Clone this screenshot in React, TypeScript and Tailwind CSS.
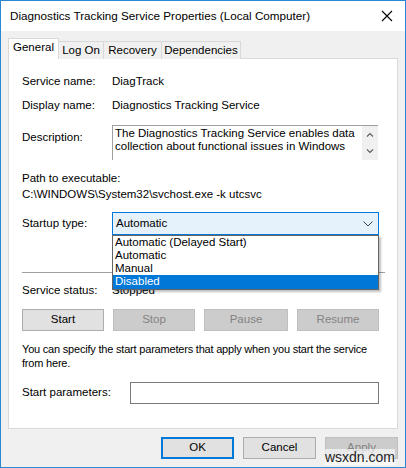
import React from "react";

const font = { fontFamily: '"Liberation Sans", Arial, sans-serif' };

function Btn({ label, disabled, w = "w-[81px]", def }: { label: string; disabled?: boolean; w?: string; def?: boolean }) {
  return (
    <div
      className={`${w} h-[22px] flex items-center justify-center ${
        disabled
          ? "bg-[#cccccc] border border-[#bfbfbf] text-[#838383]"
          : def
          ? "bg-[#e1e1e1] border-2 border-[#0078d7] text-black"
          : "bg-[#e1e1e1] border border-[#adadad] text-black"
      }`}
    >
      {label}
    </div>
  );
}

export default function App() {
  return (
    <div className="w-[406px] h-[468px] bg-[#f0f0f0] border border-[#2b86d3] flex flex-col text-[11.5px] text-black relative" style={font}>
      {/* title bar */}
      <div className="h-[30px] bg-white flex items-center justify-between pl-[9px] pr-[12px] shrink-0">
        <span className="text-[11.7px] leading-none">Diagnostics Tracking Service Properties (Local Computer)</span>
        <svg width="12" height="12" viewBox="0 0 12 12">
          <path d="M1 1L11 11M11 1L1 11" stroke="#000" strokeWidth="1.1" />
        </svg>
      </div>

      <div className="flex flex-col px-[7px] pt-[7px]">
        {/* tabs */}
        <div className="flex items-end h-[21px] relative z-10">
          <div className="h-[21px] bg-white border border-[#d9d9d9] border-b-0 flex items-center justify-center w-[51px] pb-[2px]">General</div>
          <div className="h-[18px] bg-[#f0f0f0] border border-[#d9d9d9] border-l-0 border-b-0 flex items-center justify-center w-[45px]">Log On</div>
          <div className="h-[18px] bg-[#f0f0f0] border border-[#d9d9d9] border-l-0 border-b-0 flex items-center justify-center w-[58px]">Recovery</div>
          <div className="h-[18px] bg-[#f0f0f0] border border-[#d9d9d9] border-l-0 border-b-0 flex items-center justify-center w-[79px]">Dependencies</div>
        </div>
        {/* panel */}
        <div className="bg-white border border-[#d9d9d9] h-[371px] -mt-px flex flex-col px-[13px] pt-[15px] relative">
          <div className="flex h-[16px] items-center">
            <span className="w-[90px]">Service name:</span>
            <span>DiagTrack</span>
          </div>
          <div className="flex h-[16px] items-center mt-[8px]">
            <span className="w-[90px]">Display name:</span>
            <span>Diagnostics Tracking Service</span>
          </div>
          <div className="flex mt-[11px]">
            <span className="w-[90px] pt-[4px]">Description:</span>
            <div className="w-[266px] h-[35px] border-t border-l border-[#a0a0a0] flex">
              <div className="flex-1 pl-[2px] pt-[1px] leading-[13px] whitespace-nowrap">
                The Diagnostics Tracking Service enables data
                <br />
                collection about functional issues in Windows
              </div>
              <div className="w-[16px] bg-[#f0f0f0] flex flex-col items-center justify-between py-[6px]">
                <svg width="8" height="5" viewBox="0 0 8 5"><path d="M1 4.5L4 1.5L7 4.5" stroke="#606060" fill="none" strokeWidth="1.2" /></svg>
                <svg width="8" height="5" viewBox="0 0 8 5"><path d="M1 0.5L4 3.5L7 0.5" stroke="#606060" fill="none" strokeWidth="1.2" /></svg>
              </div>
            </div>
          </div>
          <div className="mt-[11px] h-[16px] flex items-center">Path to executable:</div>
          <div className="h-[16px] flex items-center">C:\WINDOWS\System32\svchost.exe -k utcsvc</div>
          <div className="flex mt-[9px] items-center">
            <span className="w-[90px]">Startup type:</span>
            <div className="w-[267px] h-[23px] bg-[#e5f1fb] border border-[#0078d7] flex items-center justify-between pl-[3px] pr-[5px]">
              <span>Automatic</span>
              <svg width="10" height="6" viewBox="0 0 10 6"><path d="M0.5 0.5L5 5L9.5 0.5" stroke="#404040" fill="none" strokeWidth="1" /></svg>
            </div>
          </div>
          <div className="mt-[37px] h-px bg-[#a0a0a0] w-[363px]" />
          <div className="flex h-[16px] items-center mt-[10px]">
            <span className="w-[90px]">Service status:</span>
            <span>Stopped</span>
          </div>
          <div className="flex gap-[9px] mt-[10px]">
            <Btn label="Start" w="w-[82px]" />
            <Btn label="Stop" disabled w="w-[82px]" />
            <Btn label="Pause" disabled w="w-[84px]" />
            <Btn label="Resume" disabled w="w-[82px]" />
          </div>
          <div className="mt-[11px] leading-[14px] whitespace-nowrap text-[11px] tracking-[-0.2px]">
            You can specify the start parameters that apply when you start the service
            <br />
            from here.
          </div>
          <div className="flex items-center mt-[12px]">
            <span className="w-[108px]">Start parameters:</span>
            <div className="w-[249px] h-[22px] border border-[#7a7a7a] bg-white" />
          </div>

          {/* dropdown list */}
          <div className="absolute left-[103px] top-[176px] w-[267px] bg-white border border-[#646464] shadow-[2px_2px_2px_rgba(0,0,0,0.25)] flex flex-col leading-[13px] z-20">
            <div className="pl-[2px] h-[13px]">Automatic (Delayed Start)</div>
            <div className="pl-[2px] h-[13px]">Automatic</div>
            <div className="pl-[2px] h-[13px]">Manual</div>
            <div className="pl-[2px] h-[14px] bg-[#0078d7] text-white">Disabled</div>
          </div>
        </div>

        {/* bottom buttons */}
        <div className="flex justify-end gap-[9px] mt-[8px]">
          <Btn label="OK" def w="w-[73px]" />
          <Btn label="Cancel" w="w-[73px]" />
          <Btn label="Apply" disabled w="w-[73px]" />
        </div>
      </div>
      <div className="absolute right-[10px] bottom-[2px] text-[14px] text-[#222] bg-white/60 leading-[16px]">wsxdn.com</div>
    </div>
  );
}
